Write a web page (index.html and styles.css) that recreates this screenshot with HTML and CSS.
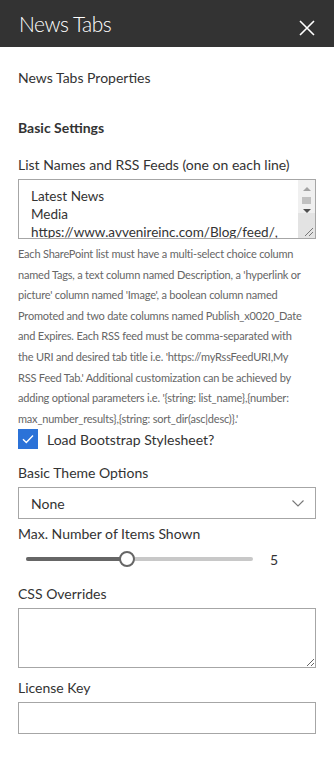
FILE: index.html
```html
<!DOCTYPE html>
<html lang="en">
<head>
    <meta charset="UTF-8">
    <meta name="viewport" content="width=device-width, initial-scale=1.0">
    <title>News Tabs</title>
    <link rel="stylesheet" href="styles.css">
</head>
<body>
    <header class="panel-header">
        <h1 class="panel-title">News Tabs</h1>
        <button class="close-button" aria-label="Close">
            <svg width="16" height="16" viewBox="0 0 16 16">
                <path d="M1 1 L15 15 M15 1 L1 15" stroke="#fff" stroke-width="1.6" fill="none"/>
            </svg>
        </button>
    </header>

    <main class="panel-body">
        <p class="panel-subtitle">News Tabs Properties</p>

        <h2 class="group-title">Basic Settings</h2>

        <div class="field">
            <label class="field-label">List Names and RSS Feeds (one on each line)</label>
            <div class="feed-box">
                <div class="feed-text">
                    <div>Latest News</div>
                    <div>Media</div>
                    <div><span class="misspelled">https://www.avvenireinc.com/Blog/feed/</span>,</div>
                </div>
                <div class="feed-scroll">
                    <span class="arrow-up"></span>
                    <span class="scroll-thumb"></span>
                    <span class="arrow-down"></span>
                    <span class="scroll-corner">
                        <svg width="9" height="9" viewBox="0 0 9 9">
                            <path d="M9 1 L1 9 M9 5 L5 9" stroke="#777" stroke-width="1" fill="none"/>
                        </svg>
                    </span>
                </div>
            </div>
            <p class="field-help">Each SharePoint list must have a multi-select choice column named Tags, a text column named Description, a 'hyperlink or picture' column named 'Image', a boolean column named Promoted and two date columns named Publish_x0020_Date and Expires. Each RSS feed must be comma-separated with the URI and desired tab title i.e. 'https://myRssFeedURI,My RSS Feed Tab.' Additional customization can be achieved by adding optional parameters i.e. '{string: list_name},{number: max_number_results},{string: sort_dir(asc|desc)}.'</p>
        </div>

        <label class="checkbox">
            <span class="checkbox-box">
                <svg width="12" height="10" viewBox="0 0 12 10">
                    <path d="M1 5.2 L4.3 8.4 L11 1.6" stroke="#fff" stroke-width="1.4" fill="none"/>
                </svg>
            </span>
            <span>Load Bootstrap Stylesheet?</span>
        </label>

        <div class="field">
            <label class="field-label">Basic Theme Options</label>
            <div class="dropdown">
                <span>None</span>
                <svg width="12" height="7" viewBox="0 0 12 7">
                    <path d="M0.5 0.5 L6 6 L11.5 0.5" stroke="#777" stroke-width="1.1" fill="none"/>
                </svg>
            </div>
        </div>

        <div class="field">
            <label class="field-label">Max. Number of Items Shown</label>
            <div class="slider">
                <div class="slider-track">
                    <div class="slider-fill" style="width: 44.4%"></div>
                    <span class="slider-thumb" style="left: 44.4%"></span>
                </div>
                <span class="slider-value">5</span>
            </div>
        </div>

        <div class="field field-spaced">
            <label class="field-label">CSS Overrides</label>
            <textarea class="text-area"></textarea>
        </div>

        <div class="field field-license">
            <label class="field-label">License Key</label>
            <input class="text-input" type="text">
        </div>
    </main>
</body>
</html>
```

FILE: styles.css
```css
body {
    margin: 0;
    font-family: 'Lato', 'Open Sans', sans-serif;
    color: #333;
    background-color: #fff;
}

.panel-header {
    height: 47px;
    background-color: #333;
    display: flex;
    align-items: center;
    justify-content: space-between;
    padding: 0 19px;
}

.panel-title {
    margin: 0;
    font-size: 21px;
    font-weight: 300;
    letter-spacing: -0.5px;
    color: #fff;
}

.close-button {
    background: none;
    border: none;
    padding: 0;
    width: 16px;
    height: 16px;
    margin-top: 9px;
    cursor: pointer;
}

.close-button svg {
    display: block;
}

.panel-body {
    padding: 0 18px;
}

.panel-subtitle {
    margin: 21px 0 0;
    font-size: 14px;
    line-height: 20px;
}

.group-title {
    margin: 30px 0 0;
    font-size: 14px;
    font-weight: 700;
    line-height: 20px;
}

.field {
    margin-top: 17px;
}

.field-label {
    display: block;
    font-size: 14px;
    line-height: 20px;
    margin-bottom: 4px;
}

.feed-box {
    display: flex;
    height: 60px;
    box-sizing: border-box;
    border: 1px solid #a6a6a6;
}

.feed-text {
    flex: 1;
    overflow: hidden;
    white-space: nowrap;
    padding: 7px 0 0 12px;
    font-size: 13.5px;
    line-height: 18px;
}

.misspelled {
    text-decoration: underline wavy #e03030;
    text-decoration-thickness: 1px;
    text-underline-offset: 2px;
}

.feed-scroll {
    width: 17px;
    display: flex;
    flex-direction: column;
    align-items: center;
    background-color: #f0f0f0;
}

.arrow-up {
    margin-top: 7px;
    border-left: 4px solid transparent;
    border-right: 4px solid transparent;
    border-bottom: 4px solid #a3a3a3;
}

.scroll-thumb {
    margin-top: 6px;
    width: 9px;
    height: 7px;
    background-color: #c1c1c1;
}

.arrow-down {
    margin-top: 5px;
    border-left: 4px solid transparent;
    border-right: 4px solid transparent;
    border-top: 4px solid #505050;
}

.scroll-corner {
    margin-top: auto;
    width: 17px;
    height: 26px;
    background-color: #e3e3e3;
    display: flex;
    align-items: flex-end;
    justify-content: flex-end;
    padding: 0 2px 2px 0;
    box-sizing: border-box;
}

.field-help {
    margin: 5px 0 0;
    padding-right: 8px;
    font-size: 11px;
    letter-spacing: -0.2px;
    line-height: 20.6px;
    color: #666;
}

.checkbox {
    display: flex;
    align-items: center;
    gap: 9px;
    font-size: 14px;
}

.checkbox-box {
    width: 20px;
    height: 20px;
    background-color: #2b72d8;
    display: flex;
    align-items: center;
    justify-content: center;
}

.checkbox + .field {
    margin-top: 14px;
}

.dropdown {
    height: 32px;
    box-sizing: border-box;
    border: 1px solid #a6a6a6;
    display: flex;
    align-items: center;
    justify-content: space-between;
    padding: 0 11px 0 12px;
    font-size: 14px;
}

.field + .field {
    margin-top: 5px;
}

.slider {
    display: flex;
    align-items: center;
    height: 22px;
    padding-left: 8px;
    margin-top: 2px;
}

.slider-track {
    position: relative;
    width: 227px;
    height: 4px;
    border-radius: 2px;
    background-color: #c8c8c8;
}

.slider-fill {
    height: 4px;
    border-radius: 2px;
    background-color: #666;
}

.slider-thumb {
    position: absolute;
    top: -6px;
    width: 12px;
    height: 12px;
    margin-left: -8px;
    border: 2px solid #666;
    border-radius: 50%;
    background-color: #fff;
}

.slider-value {
    margin-left: 17px;
    font-size: 14px;
}

.field.field-spaced {
    margin-top: 14px;
}

.field.field-license {
    margin-top: 10px;
}

.text-area,
.text-input {
    display: block;
    width: 100%;
    box-sizing: border-box;
    border: 1px solid #a6a6a6;
    border-radius: 0;
    margin: 0;
    font-family: inherit;
}

.text-area {
    height: 60px;
}

.text-input {
    height: 32px;
}
```
